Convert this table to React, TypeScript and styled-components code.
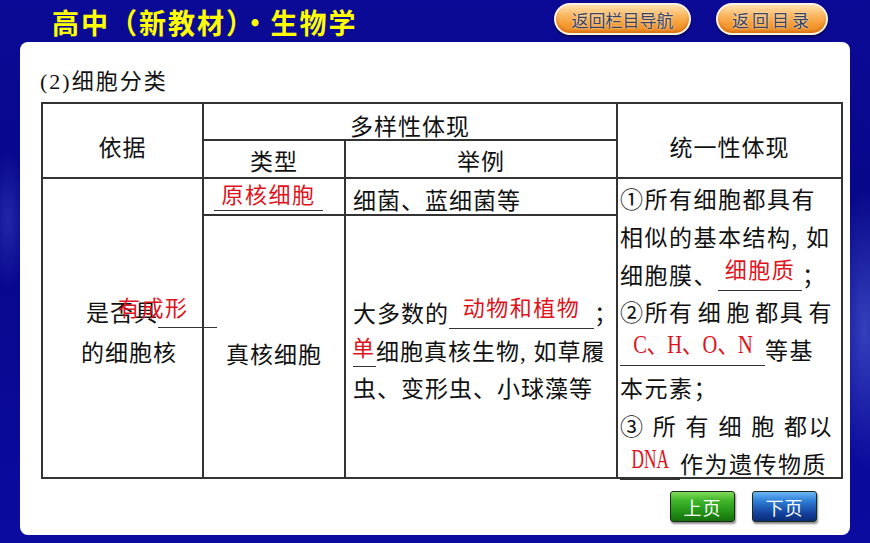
import React from "react";
import styled, { createGlobalStyle } from "styled-components";

const Global = createGlobalStyle`
  html, body { margin: 0; padding: 0; }
  body { font-family: "Noto Sans CJK SC", sans-serif; }
`;

const Page = styled.div`
  width: 870px;
  height: 543px;
  overflow: hidden;
  display: flex;
  flex-direction: column;
  background:
    radial-gradient(ellipse 50px 200px at 865px 330px, rgba(120,150,255,0.4), rgba(0,0,0,0) 70%),
    radial-gradient(ellipse 30px 100px at 8px 220px, rgba(110,130,255,0.25), rgba(0,0,0,0) 70%),
    linear-gradient(180deg, #0a0a96 0%, #07078a 40%, #0b0ba0 100%);
`;

const TopBar = styled.div`
  height: 42px;
  display: flex;
  align-items: flex-start;
  padding: 0 42px 0 52px;
  box-sizing: border-box;
`;

const Title = styled.div`
  margin-top: 5px;
  color: #ffff00;
  font-family: "Noto Sans CJK SC", sans-serif;
  font-weight: 700;
  font-size: 27px;
  line-height: 32px;
  letter-spacing: 2px;
  transform: scaleY(1.06);
  transform-origin: top left;
`;

const NavGroup = styled.div`
  margin-left: auto;
  display: flex;
  gap: 25px;
  padding-top: 3px;
`;

const PillButton = styled.div<{ $w: number; $ls: number }>`
  width: ${(p) => p.$w}px;
  height: 32px;
  box-sizing: border-box;
  border-radius: 16px;
  border: 2px solid #fff4e0;
  background: linear-gradient(180deg, #ffe2b0 0%, #fbb965 35%, #f59a32 70%, #ee8c25 100%);
  box-shadow: 0 2px 2px rgba(0, 0, 40, 0.6), inset 0 -2px 3px rgba(190, 90, 0, 0.5);
  display: flex;
  align-items: center;
  justify-content: center;
  color: #36425e;
  font-family: "Noto Sans CJK SC", sans-serif;
  font-size: 17px;
  letter-spacing: ${(p) => p.$ls}px;
  text-shadow: 0 0 2px #fff;
`;

const Panel = styled.div`
  margin: 0 20px;
  height: 493px;
  background: #ffffff;
  border-radius: 8px;
  padding: 27px 0 0 20px;
  box-sizing: border-box;
  display: flex;
  flex-direction: column;
`;

const Caption = styled.div`
  font-family: "Liberation Serif", "Noto Sans CJK SC", serif;
  font-size: 22px;
  line-height: 26px;
  letter-spacing: 2px;
  color: #111;
  margin-bottom: 7px;
`;

const Grid = styled.div`
  margin-left: 1px;
  width: 802px;
  box-sizing: border-box;
  display: grid;
  grid-template-columns: 161px 142px 272px 225px;
  grid-template-rows: 37px 38px 37px 263px;
  border-top: 2px solid #333;
  border-left: 2px solid #333;
  font-family: "Liberation Serif", "Noto Sans CJK SC", serif;
  font-size: 23px;
  letter-spacing: 1px;
  color: #111;
`;

const Cell = styled.div<{
  $col: string;
  $row: string;
  $align?: "center" | "start";
  $valign?: "center" | "start";
  $pt?: number;
  $pl?: number;
  $pr?: number;
  $ls?: number;
}>`
  grid-column: ${(p) => p.$col};
  grid-row: ${(p) => p.$row};
  border-right: 2px solid #333;
  border-bottom: 2px solid #333;
  display: flex;
  flex-direction: column;
  justify-content: ${(p) => (p.$valign === "start" ? "flex-start" : "center")};
  align-items: ${(p) => (p.$align === "start" ? "flex-start" : "center")};
  padding: ${(p) => p.$pt ?? 0}px ${(p) => p.$pr ?? 0}px 0 ${(p) => p.$pl ?? 0}px;
  box-sizing: border-box;
  white-space: nowrap;
  ${(p) => (p.$ls !== undefined ? `letter-spacing: ${p.$ls}px;` : "")}
`;

const Line = styled.div<{ $lh?: number; $indent?: number }>`
  line-height: ${(p) => p.$lh ?? 38}px;
  height: ${(p) => p.$lh ?? 38}px;
  padding-left: ${(p) => p.$indent ?? 0}px;
  align-self: stretch;
`;

const SpreadLine = styled.div`
  line-height: 37.8px;
  height: 37.8px;
  align-self: stretch;
  display: flex;
  justify-content: space-between;
`;

const Blank = styled.span<{ $w: number; $left?: boolean }>`
  display: inline-block;
  width: ${(p) => p.$w}px;
  line-height: 26px;
  vertical-align: baseline;
  border-bottom: 1.5px solid #333;
  text-align: ${(p) => (p.$left ? "left" : "center")};
  white-space: nowrap;
`;

const Answer = styled.span<{ $raise?: number; $shift?: number }>`
  display: inline-block;
  position: relative;
  top: ${(p) => -(p.$raise ?? 6)}px;
  left: ${(p) => p.$shift ?? 0}px;
  color: #e0121c;
  font-family: "Noto Sans CJK SC", sans-serif;
  font-size: 22px;
  letter-spacing: 1.5px;
  white-space: nowrap;
`;

const LatinAnswer = styled.span<{ $size: number; $sx: number; $raise?: number }>`
  display: inline-block;
  position: relative;
  top: ${(p) => -(p.$raise ?? 5)}px;
  color: #e0121c;
  font-family: "Liberation Serif", "Noto Sans CJK SC", serif;
  font-size: ${(p) => p.$size}px;
  letter-spacing: 0;
  transform: scaleX(${(p) => p.$sx});
  transform-origin: center;
  white-space: nowrap;
`;

const BottomRow = styled.div`
  display: flex;
  justify-content: flex-end;
  gap: 17px;
  margin-top: 12px;
  padding-right: 33px;
`;

const PageButton = styled.div<{ $tone: "green" | "blue" }>`
  width: 65px;
  height: 31px;
  box-sizing: border-box;
  border-radius: 3px;
  border: 1px solid #1c2a1c;
  background: ${(p) =>
    p.$tone === "green"
      ? "linear-gradient(180deg, #7fdc5a 0%, #3fb52a 30%, #1f8d14 75%, #15700c 100%)"
      : "linear-gradient(180deg, #6cb8f4 0%, #2f7fd8 30%, #123f9a 75%, #0c2f7a 100%)"};
  box-shadow: 1px 2px 2px rgba(0, 0, 0, 0.45);
  color: #ffffff;
  font-family: "Noto Sans CJK SC", sans-serif;
  font-size: 18px;
  display: flex;
  align-items: center;
  justify-content: center;
  letter-spacing: 1px;
`;

export default function App() {
  return (
    <>
      <Global />
      <Page>
        <TopBar>
          <Title>高中（新教材）·生物学</Title>
          <NavGroup>
            <PillButton $w={137} $ls={0}>返回栏目导航</PillButton>
            <PillButton $w={112} $ls={3}>返回目录</PillButton>
          </NavGroup>
        </TopBar>
        <Panel>
          <Caption>(2)细胞分类</Caption>
          <Grid>
            <Cell $col="1" $row="1 / span 2" $pt={10}>依据</Cell>
            <Cell $col="2 / span 2" $row="1" $pt={6}>多样性体现</Cell>
            <Cell $col="4" $row="1 / span 2" $pt={10}>统一性体现</Cell>
            <Cell $col="2" $row="2" $pt={2}>类型</Cell>
            <Cell $col="3" $row="2" $pt={2}>举例</Cell>

            <Cell $col="1" $row="3 / span 2" $align="start" $pt={12}>
              <Line $lh={40} $indent={43}>
                是否具
                <Blank $w={59} $left>
                  <Answer $shift={-40} $raise={5}>有成形</Answer>
                </Blank>
              </Line>
              <Line $lh={40} $indent={38}>的细胞核</Line>
            </Cell>

            <Cell $col="2" $row="3" $align="start" $pl={10}>
              <Line $lh={34}>
                <Blank $w={109}>
                  <Answer $raise={1}>原核细胞</Answer>
                </Blank>
              </Line>
            </Cell>
            <Cell $col="3" $row="3" $align="start" $pl={7} $pt={4}>
              细菌、蓝细菌等
            </Cell>

            <Cell $col="2" $row="4" $pt={12}>真核细胞</Cell>
            <Cell $col="3" $row="4" $align="start" $pl={7} $pt={12}>
              <Line $lh={37.8}>
                大多数的
                <Blank $w={145}>
                  <Answer>动物和植物</Answer>
                </Blank>
                ；
              </Line>
              <Line $lh={37.8}>
                <Blank $w={23}>
                  <Answer $raise={4} $shift={-1}>单</Answer>
                </Blank>
                细胞真核生物, 如草履
              </Line>
              <Line $lh={37.8}>虫、变形虫、小球藻等</Line>
            </Cell>

            <Cell $col="4" $row="3 / span 2" $align="start" $valign="start" $pt={3} $pl={2} $pr={8} $ls={1.5}>
              <Line $lh={37.8}>①所有细胞都具有</Line>
              <Line $lh={37.8}>相似的基本结构, 如</Line>
              <Line $lh={37.8}>
                细胞膜、
                <Blank $w={84}>
                  <Answer>细胞质</Answer>
                </Blank>
                ；
              </Line>
              <SpreadLine>
                <span>②所有</span>
                <span>细</span>
                <span>胞</span>
                <span>都具</span>
                <span>有</span>
              </SpreadLine>
              <Line $lh={37.8}>
                <Blank $w={145}>
                  <LatinAnswer $size={25} $sx={0.82} $raise={6}>C、H、O、N</LatinAnswer>
                </Blank>
                等基
              </Line>
              <Line $lh={37.8}>本元素；</Line>
              <SpreadLine>
                <span>③</span>
                <span>所</span>
                <span>有</span>
                <span>细</span>
                <span>胞</span>
                <span>都以</span>
              </SpreadLine>
              <Line $lh={37.8}>
                <Blank $w={60}>
                  <LatinAnswer $size={27} $sx={0.64} $raise={5}>DNA</LatinAnswer>
                </Blank>
                作为遗传物质
              </Line>
            </Cell>
          </Grid>
          <BottomRow>
            <PageButton $tone="green">上页</PageButton>
            <PageButton $tone="blue">下页</PageButton>
          </BottomRow>
        </Panel>
      </Page>
    </>
  );
}
